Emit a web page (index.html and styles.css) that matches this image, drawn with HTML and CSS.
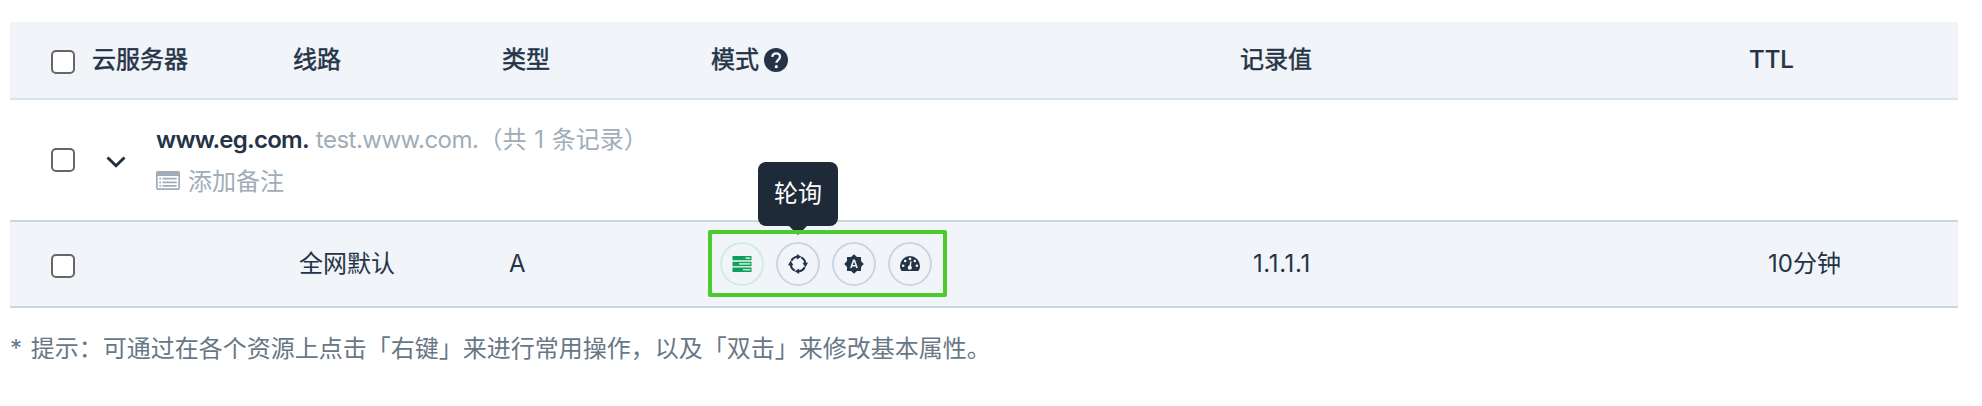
FILE: index.html
```html
<!DOCTYPE html>
<html lang="zh-CN">
<head>
<meta charset="utf-8">
<title>云服务器</title>
<link rel="stylesheet" href="styles.css">
</head>
<body>
<main class="table">
  <div class="row head">
    <div class="cell first"><span class="checkbox"></span><span class="label">云服务器</span></div>
    <div class="cell">线路</div>
    <div class="cell">类型</div>
    <div class="cell mode-title">模式
      <svg class="help" viewBox="0 0 24 24"><circle cx="12" cy="12" r="12" fill="#253347"/><path d="M8.2 8.9C8.5 6.6 10 5.4 12.1 5.4c2.2 0 3.9 1.3 3.9 3.4 0 2.9-3.6 3.1-3.6 6" fill="none" stroke="#f1f5f9" stroke-width="2.3"/><circle cx="12.3" cy="18.7" r="1.6" fill="#f1f5f9"/></svg>
    </div>
    <div class="cell">记录值</div>
    <div class="cell ttl">TTL</div>
  </div>
  <div class="row group">
    <span class="checkbox"></span>
    <svg class="chevron" viewBox="0 0 20 14"><path d="M1.500 2.500l8.500 8.300 8.500-8.300" fill="none" stroke="#1f2d3d" stroke-width="2.900"/></svg>
    <div class="info">
      <div class="line"><strong class="domain">www.eg.com.</strong><span class="alias">test.www.com.</span><span class="count">（共 1 条记录）</span></div>
      <div class="line note">
        <svg class="list" viewBox="0 0 24 19"><path fill="#a0adb8" fill-rule="evenodd" d="M1.800 0h20.400Q24 0 24 1.800v15.400q0 1.800-1.800 1.800H1.800Q0 19 0 17.200V1.800Q0 0 1.800 0zM1.700 5v11.700q0 .6.6.6h19.400q.6 0 .6-.6V5z"/><path d="M3.300 7.700h1.700M3.300 11.300h1.700M3.300 14.900h1.700M6.500 7.700h14.200M6.500 11.300h14.200M6.500 14.900h14.200" stroke="#a0adb8" stroke-width="1.700"/></svg>
        <span>添加备注</span>
      </div>
    </div>
  </div>
  <div class="row record">
    <div class="cell first"><span class="checkbox"></span></div>
    <div class="cell">全网默认</div>
    <div class="cell">A</div>
    <div class="cell modes">
      <div class="mode active">
        <svg class="icon" viewBox="0 0 20 20"><path fill="#0f9f5a" d="M.5 2h19v4.300H.5zM.5 7.700h19V12H.5zM.5 13.600h19V18H.5z"/><path fill="#b5e3cc" d="M13.500 3.300h4.800v1.600h-4.800zM7 9h11.300v1.800H7zM11 15h7.300v1.600H11zM.5 6.300h19v.6H.5zM.5 12h19v.7H.5z"/></svg>
      </div>
      <div class="mode rotate">
        <svg class="icon" viewBox="0 0 20 20"><g id="arc"><path d="M3.400 6.800A7.300 7.300 0 0 1 9.300 2.700" fill="none" stroke="#253347" stroke-width="2.100"/><path d="M8.800 0L13.400 2.700 8.800 5.400z" fill="#253347"/></g><use href="#arc" transform="rotate(90 10 10)"/><use href="#arc" transform="rotate(180 10 10)"/><use href="#arc" transform="rotate(270 10 10)"/></svg>
        <div class="tooltip">轮询</div>
      </div>
      <div class="mode">
        <svg class="icon" viewBox="0 0 20 20"><path fill="#253347" d="M10 .2L13 3h4v4l2.800 3L17 13v4h-4l-3 2.800L7 17H3v-4L.2 10 3 7V3h4z"/><path d="M6.900 14L9.600 6.200h.8L13.100 14M8 11.700h4" fill="none" stroke="#edf1f5" stroke-width="1.600"/></svg>
      </div>
      <div class="mode">
        <svg class="icon" viewBox="0 0 20 20"><path fill="#253347" d="M10 2a10 10 0 0 1 10 10q0 2.700-1 4.300-.4.700-1.200.7H2.200q-.8 0-1.200-.7Q0 14.700 0 12A10 10 0 0 1 10 2z"/><g fill="#f1f5f9"><circle cx="3.200" cy="11.700" r="1.300"/><circle cx="5.200" cy="7" r="1.300"/><circle cx="10" cy="4.900" r="1.300"/><circle cx="14.800" cy="7" r="1.300"/><circle cx="16.900" cy="11.700" r="1.300"/><circle cx="9.800" cy="13.700" r="2.100"/><path d="M10.500 7l1 .2-.7 7-2-.4z"/></g></svg>
      </div>
      <div class="outline"></div>
    </div>
    <div class="cell ip">1.1.1.1</div>
    <div class="cell">10分钟</div>
  </div>
</main>
<p class="hint">* 提示：可通过在各个资源上点击「右键」来进行常用操作，以及「双击」来修改基本属性。</p>
</body>
</html>
```
FILE: styles.css
```css
* { box-sizing: border-box; }
body {
  margin: 0;
  padding: 22px 24px 0 10px;
  background: #fff;
  color: #253347;
  font: 24px/36px Inter, "Noto Sans CJK SC", sans-serif;
}
.row { border-bottom: 2px solid #cbd5e1; }
.head, .record {
  display: grid;
  grid-template-columns: 283px 209px 209px 529px 509px 1fr;
  align-items: center;
  background: #f1f5f9;
}
.head { height: 78px; border-color: #d9e3ec; }
.head .cell { -webkit-text-stroke: 0.5px currentColor; }
.head .ttl { font-weight: 500; -webkit-text-stroke: 0.2px currentColor; }
.first { display: flex; align-items: center; padding-left: 41px; }
.first .label { margin-left: 17px; }
.head .checkbox { position: relative; top: 2px; }
.checkbox {
  flex: none;
  width: 24px;
  height: 24px;
  border: 2px solid #666;
  border-radius: 5px;
  background: #fff;
}
.mode-title { display: flex; align-items: center; gap: 5px; }
.help { width: 24px; height: 24px; }
.group {
  display: flex;
  align-items: center;
  height: 122px;
  padding-left: 41px;
}
.chevron { width: 20px; height: 14px; margin: 3px 0 0 31px; }
.info { margin-left: 30px; padding-top: 2px; }
.line { display: flex; align-items: center; height: 42px; color: #a0adb8; white-space: nowrap; }
.domain { color: #253347; font-weight: 600; letter-spacing: -0.75px; }
.alias { margin-left: 7px; letter-spacing: -0.5px; }
.count { word-spacing: 1px; }
.note { gap: 8px; }
.list { width: 24px; height: 19px; margin-top: -4px; }
.record { height: 86px; }
.record .cell { padding-left: 6px; }
.record .cell:nth-child(3) { padding-left: 7px; }
.record .cell:nth-child(5) { padding-left: 13px; }
.record .cell:nth-child(6) { padding-left: 19px; }
.record .first { padding-left: 41px; padding-top: 4px; }
.ip { letter-spacing: 0.6px; }
.record .modes {
  position: relative;
  display: flex;
  gap: 12px;
  padding-left: 9px;
}
.mode {
  position: relative;
  display: flex;
  align-items: center;
  justify-content: center;
  width: 44px;
  height: 44px;
  border: 2px solid #cbd5e1;
  border-radius: 50%;
}
.mode.active { border-color: #caefdd; }
.icon { width: 20px; height: 20px; }
.outline {
  position: absolute;
  left: -3px;
  top: -12px;
  width: 239px;
  height: 67px;
  border: 4px solid #4bcb2d;
  border-radius: 2px;
}
.tooltip {
  position: absolute;
  left: -20px;
  top: -82px;
  width: 80px;
  height: 64px;
  border-radius: 8px;
  background: #1e2a38;
  color: #fff;
  line-height: 64px;
  text-align: center;
}
.tooltip::after {
  content: "";
  position: absolute;
  left: 30px;
  top: 63px;
  border: 10px solid transparent;
  border-top-color: #1e2a38;
  border-bottom: 0;
}
.hint { margin: 23px 0 0; color: #687786; white-space: nowrap; word-spacing: 2px; }
```
